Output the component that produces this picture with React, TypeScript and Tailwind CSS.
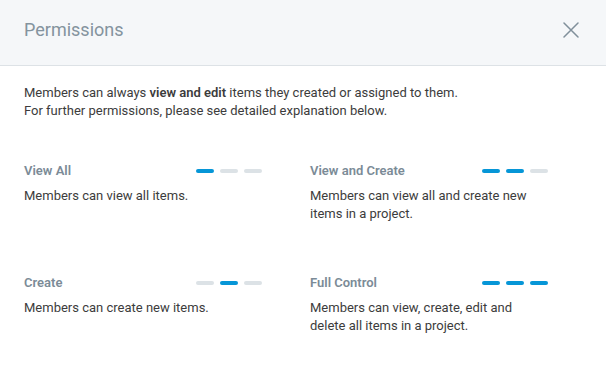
const levels = [
  { name: "View All", level: [true, false, false], text: "Members can view all items." },
  { name: "View and Create", level: [true, true, false], text: "Members can view all and create new items in a project." },
  { name: "Create", level: [false, true, false], text: "Members can create new items." },
  { name: "Full Control", level: [true, true, true], text: "Members can view, create, edit and delete all items in a project." },
];

function CloseIcon() {
  return (
    <svg width="16" height="16" viewBox="0 0 16 16" fill="none" stroke="#80909b" strokeWidth="1.5" strokeLinecap="round">
      <path d="M1 1L15 15M15 1L1 15" />
    </svg>
  );
}

export default function App() {
  return (
    <div className="w-[606px] h-[372px] bg-white text-[13px] leading-[18px] text-[#3c3c3c] font-['Roboto','Liberation_Sans',sans-serif]">
      <div className="h-[66px] flex items-center justify-between pl-6 pr-[27px] pb-[6px] bg-[#f5f7f9] border-b border-[#dde2e6]">
        <h1 className="text-[18px] text-[#84939e] font-normal">Permissions</h1>
        <CloseIcon />
      </div>
      <div className="px-6 pt-[18px]">
        <p>
          Members can always <b className="font-semibold">view and edit</b> items they created or assigned to them.
          <br />
          For further permissions, please see detailed explanation below.
        </p>
        <div className="mt-[42px] grid grid-cols-[238px_238px] gap-x-12 gap-y-[51px]">
          {levels.map((l) => (
            <div key={l.name}>
              <div className="flex items-center justify-between">
                <span className="font-semibold text-[#7b8b97]">{l.name}</span>
                <div className="flex gap-[6px]">
                  {l.level.map((on, i) => (
                    <div key={i} className={on ? "w-[18px] h-[4px] rounded-full bg-[#0696d7]" : "w-[18px] h-[4px] rounded-full bg-[#dce2e6]"} />
                  ))}
                </div>
              </div>
              <p className="mt-[7px]">{l.text}</p>
            </div>
          ))}
        </div>
      </div>
    </div>
  );
}
